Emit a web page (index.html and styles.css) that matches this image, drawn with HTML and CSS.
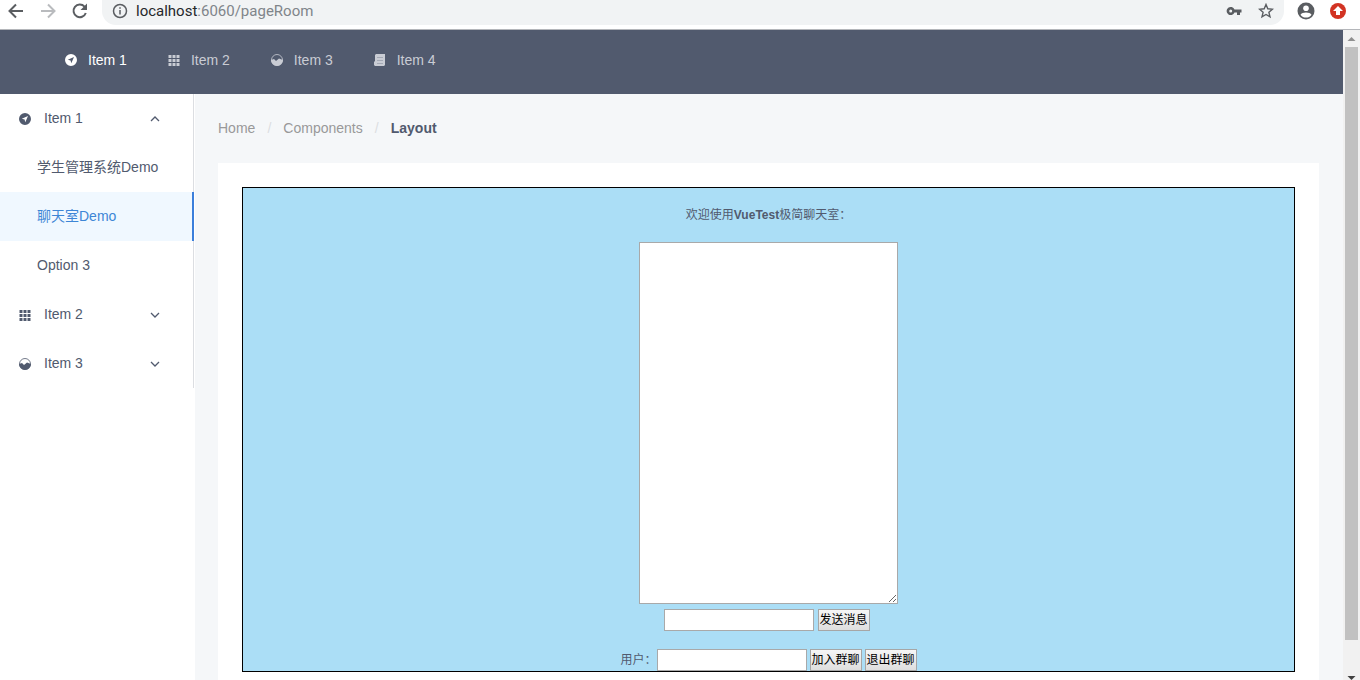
FILE: index.html
```html
<!DOCTYPE html>
<html lang="zh-CN">
<head>
<meta charset="utf-8">
<title>pageRoom</title>
<link rel="stylesheet" href="styles.css">
</head>
<body>
<svg class="defs" aria-hidden="true">
  <symbol id="nav" viewBox="0 0 12 12"><path fill="currentColor" fill-rule="evenodd" d="M6 0a6 6 0 1 1 0 12A6 6 0 0 1 6 0ZM9 3 2.800 5.700 5.600 6.400 6.300 9.200Z"/></symbol>
  <symbol id="keypad" viewBox="0 0 12 12"><path fill="currentColor" d="M.5 1h3v3h-3zM4.500 1h3v3h-3zM8.500 1h3v3h-3zM.5 5h3v3h-3zM4.500 5h3v3h-3zM8.500 5h3v3h-3zM.5 9h3v3h-3zM4.500 9h3v3h-3zM8.500 9h3v3h-3z"/></symbol>
  <symbol id="analytics" viewBox="0 0 12 12"><circle cx="6" cy="6" r="5.500" fill="none" stroke="currentColor" stroke-opacity=".8"/><path fill="currentColor" d="M0 6 3 5l2 2 3-2.500L12 6A6 6 0 0 1 0 6Z"/></symbol>
  <symbol id="paper" viewBox="0 0 12 12"><path fill="currentColor" d="M2 0h9v11l-1 1H1l-1-1V8l1-1V1z"/><path stroke="#515a6e" stroke-opacity=".3" d="M3 3.500h6M3 6.500h6M3 9.500h6"/></symbol>
  <symbol id="down" viewBox="0 0 10 10"><path fill="none" stroke="currentColor" stroke-width="1.300" d="m1 3 4 4 4-4"/></symbol>
  <symbol id="up" viewBox="0 0 10 10"><path fill="none" stroke="currentColor" stroke-width="1.300" d="m1 7 4-4 4 4"/></symbol>
</svg>

<div class="toolbar">
  <button class="tool" aria-label="Back"><svg viewBox="0 0 16 16"><path d="M15 8H2M8 1.500 1.500 8 8 14.500"/></svg></button>
  <button class="tool tool-off" aria-label="Forward"><svg viewBox="0 0 16 16"><path d="M1 8h13M8 1.500 14.500 8 8 14.500"/></svg></button>
  <button class="tool" aria-label="Reload"><svg viewBox="0 0 16 16"><path d="M13.800 10A6.300 6.300 0 1 1 12.500 3.600L14 5.200"/><path class="solid" d="M15 .5V7H8.500z"/></svg></button>
  <div class="address">
    <svg class="info" viewBox="0 0 16 16"><circle cx="8" cy="8" r="6.500"/><path d="M8 7v4.500M8 4.200v1.600"/></svg>
    <span class="url"><span class="host">localhost</span>:6060/pageRoom</span>
    <button class="tool key" aria-label="Passwords"><svg viewBox="0 0 16 16"><path class="solid" fill-rule="evenodd" d="M8.500 6.500H15.500v3H14V12h-3V9.500H8.500a4.100 4.100 0 1 1 0-3ZM4.700 6.500a1.500 1.500 0 1 0 0 3 1.500 1.500 0 0 0 0-3Z"/></svg></button>
    <button class="tool" aria-label="Bookmark"><svg viewBox="0 0 16 16"><path class="thin" d="m8 1.500 1.800 4.300 4.700.4-3.600 3.100 1.100 4.600L8 11.500l-4 2.400 1.100-4.600-3.600-3.100 4.700-.4z"/></svg></button>
  </div>
  <button class="tool account" aria-label="Account"><svg viewBox="0 0 18 18"><circle class="solid" cx="9" cy="9" r="8.500"/><circle class="hole" cx="9" cy="6.300" r="2.800"/><path class="hole" d="M3.500 12.700C5 9.800 13 9.800 14.500 12.700 12 16.500 6 16.500 3.500 12.700Z"/></svg></button>
  <button class="tool update" aria-label="Update"><svg viewBox="0 0 16 16"><circle class="red" cx="8" cy="8" r="8"/><path class="hole" d="m8 3 5 5h-3v4H6V8H3z"/></svg></button>
</div>

<div class="window">
  <div class="page">
    <header class="header">
      <nav class="topnav">
        <a class="toplink current" href="#"><svg><use href="#nav"/></svg>Item 1</a>
        <a class="toplink" href="#"><svg><use href="#keypad"/></svg>Item 2</a>
        <a class="toplink" href="#"><svg><use href="#analytics"/></svg>Item 3</a>
        <a class="toplink" href="#"><svg><use href="#paper"/></svg>Item 4</a>
      </nav>
    </header>
    <div class="body">
      <aside class="sider">
        <nav class="menu">
          <button class="group"><svg class="icon"><use href="#nav"/></svg><span>Item 1</span><svg class="arrow"><use href="#up"/></svg></button>
          <a class="option" href="#">学生管理系统Demo</a>
          <a class="option selected" href="#">聊天室Demo</a>
          <a class="option" href="#">Option 3</a>
          <button class="group"><svg class="icon"><use href="#keypad"/></svg><span>Item 2</span><svg class="arrow"><use href="#down"/></svg></button>
          <button class="group"><svg class="icon"><use href="#analytics"/></svg><span>Item 3</span><svg class="arrow"><use href="#down"/></svg></button>
        </nav>
      </aside>
      <main class="main">
        <nav class="crumbs"><a href="#">Home</a><span class="slash">/</span><a href="#">Components</a><span class="slash">/</span><strong>Layout</strong></nav>
        <section class="content">
          <div class="room">
            <p class="welcome">欢迎使用<b>VueTest</b>极简聊天室：</p>
            <textarea class="log" aria-label="聊天记录"></textarea>
            <form class="row send">
              <input class="field" type="text" aria-label="消息">
              <button class="btn" type="button">发送消息</button>
            </form>
            <form class="row">
              <label for="user">用户：</label>
              <input class="field" id="user" type="text">
              <button class="btn" type="button">加入群聊</button>
              <button class="btn" type="button">退出群聊</button>
            </form>
          </div>
        </section>
      </main>
    </div>
  </div>
  <div class="scrollbar" aria-hidden="true">
    <svg class="scroll-up" viewBox="0 0 17 17"><path fill="#8f8f8f" d="m4.500 11 4-4 4 4z"/></svg>
    <div class="thumb"></div>
    <svg class="scroll-down" viewBox="0 0 17 4"><path fill="#404040" d="m4.500 0 4 4 4-4z"/></svg>
  </div>
</div>
</body>
</html>
```
FILE: styles.css
```css
* { box-sizing: border-box; }
body {
  margin: 0;
  height: 100vh;
  overflow: hidden;
  display: flex;
  flex-direction: column;
  font: 14px/21px "Liberation Sans", "Noto Sans CJK SC", sans-serif;
  color: #515a6e;
  background: #fff;
}
button { font: inherit; color: inherit; border: 0; background: none; padding: 0; }
a { color: inherit; text-decoration: none; }
svg { display: block; flex: none; }
.defs { position: absolute; width: 0; height: 0; }

/* Browser toolbar */
.toolbar {
  flex: none;
  display: flex;
  align-items: flex-start;
  height: 30px;
  padding: 0 14px 0 8px;
  border-bottom: 1px solid #b4b6ba;
}
.tool { width: 16px; margin: 3px 16px 0 0; }
.tool svg, .info { width: 16px; height: 16px; fill: none; stroke: #5a5d61; stroke-width: 2; }
.tool-off svg { stroke: #b9bbbe; }
.tool .solid { fill: #5a5d61; stroke: none; }
.tool .hole { fill: #fff; stroke: none; }
.tool .red { fill: #d23323; stroke: none; }
.tool .thin { stroke-width: 1.4; }
.address {
  flex: 1;
  display: flex;
  align-items: flex-start;
  height: 25px;
  padding-left: 8px;
  margin: 0 13px 0 -2px;
  border-radius: 0 0 14px 14px;
  background: #f1f3f4;
}
.address .tool:last-child { margin-right: 10px; }
.info { margin: 3px 8px 0 2px; }
.address .info { stroke-width: 1.5; }
.url { flex: 1; font: 15px/22px Roboto, sans-serif; color: #80858a; }
.host { color: #26282b; }
.account { width: 18px; margin: 2px 15px 0 0; }
.account svg { width: 18px; height: 18px; }
.update { margin-right: 0; }

/* Window with its scrollbar */
.window { flex: 1; min-height: 0; display: flex; }
.page { flex: 1; display: flex; flex-direction: column; overflow: hidden; }
.scrollbar {
  width: 17px;
  display: flex;
  flex-direction: column;
  background: #f1f1f1;
}
.scroll-up { width: 17px; height: 17px; }
.scroll-down { width: 17px; height: 4px; }
.thumb { flex: 1; margin: 0 2px 36px; background: #c1c1c1; }

.header { flex: none; height: 64px; padding-left: 45px; background: #515a6e; }
.topnav { display: flex; gap: 1px; height: 100%; }
.toplink {
  display: flex;
  align-items: center;
  gap: 11px;
  padding: 0 20px 4px;
  color: #c9ccd4;
}
.toplink svg { width: 12px; height: 12px; }
.current { color: #fff; }

.body { flex: 1; display: flex; min-height: 0; background: #f5f7f9; }
.sider { flex: none; width: 195px; background: #fff; }
.menu { width: 194px; border-right: 1px solid #dcdee2; }
.group, .option { display: flex; align-items: center; height: 49px; }
.group { width: 100%; padding: 0 33px 0 19px; text-align: left; }
.group span { flex: 1; }
.icon { width: 12px; height: 12px; margin-right: 13px; }
.arrow { width: 10px; height: 10px; }
.option { padding-left: 37px; }
.selected {
  margin-right: -1px;
  color: #3d86d6;
  background: #f0f8ff;
  border-right: 2px solid #3c7fdb;
}

.main { flex: 1; padding: 0 24px; margin-left: -1px; }
.crumbs { display: flex; padding: 24px 0; color: #999; }
.slash { width: 28px; text-align: center; color: #dcdee2; }
.crumbs strong { color: #515a6e; }
.content { height: 100%; padding: 24px; background: #fff; }
.room {
  display: flex;
  flex-direction: column;
  align-items: center;
  border: 1px solid #000;
  background: #abdef6;
  font-size: 12px;
  line-height: 18px;
}
.welcome { margin: 18px 0; }
.log {
  width: 259px;
  height: 362px;
  margin-bottom: 5px;
  border: 1px solid #a9a9a9;
  background: #fff;
}
.row { display: flex; align-items: center; gap: 3px; }
.row label { margin-right: -3px; }
.send { gap: 4px; margin-bottom: 18px; padding-right: 4px; }
.field { width: 150px; height: 22px; border: 1px solid #a9a9a9; background: #fff; }
.btn {
  width: 52px;
  height: 22px;
  border: 1px solid #a6a6a6;
  background: linear-gradient(#f6f6f6, #dedede);
  color: #000;
}
```
